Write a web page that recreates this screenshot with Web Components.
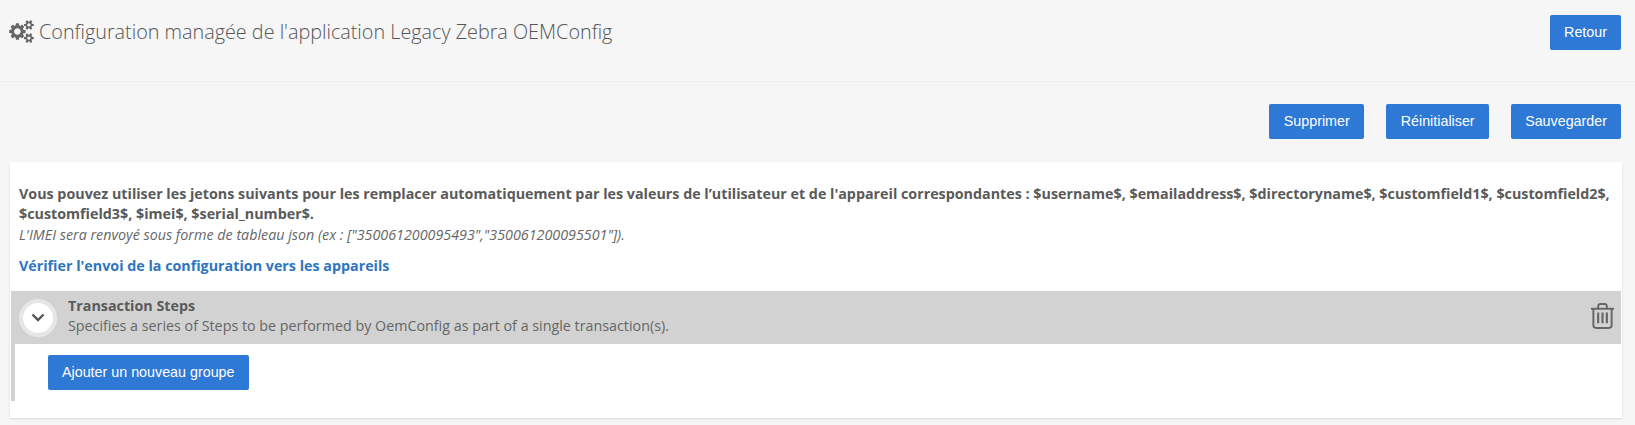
<!DOCTYPE html>
<html lang="fr"><head><meta charset="utf-8"><title>Configuration</title>
<style>
html,body{margin:0;padding:0;background:#f6f6f6;height:425px;overflow:hidden}
body{font-family:"Open Sans",sans-serif;color:#555}
</style></head><body>
<config-page></config-page>
<script>
const GEARS="M896 896q0-106-75-181t-181-75-181 75-75 181 75 181 181 75 181-75 75-181zm768 512q0-52-38-90t-90-38-90 38-38 90q0 53 37.5 90.5t90.5 37.5 90.5-37.5 37.5-90.5zm0-1024q0-52-38-90t-90-38-90 38-38 90q0 53 37.5 90.5t90.5 37.5 90.5-37.5 37.5-90.5zm-384 421v185q0 10-7 19.5t-16 10.5l-155 24q-11 35-32 76 34 48 90 115 7 11 7 20 0 12-7 19-23 30-82.5 89.5t-78.5 59.5q-11 0-21-7l-115-90q-37 19-77 31-11 108-23 155-7 24-30 24h-186q-11 0-20-7.5t-10-17.5l-23-153q-34-10-75-31l-118 89q-7 7-20 7-11 0-21-8-144-133-144-160 0-9 7-19 10-14 41-53t47-61q-23-44-35-82l-152-24q-10-1-17-9.5t-7-19.5v-185q0-10 7-19.5t16-10.5l155-24q11-35 32-76-34-48-90-115-7-11-7-20 0-12 7-20 22-30 82-89t79-59q11 0 21 7l115 90q34-18 77-32 11-108 23-154 7-24 30-24h186q11 0 20 7.5t10 17.5l23 153q34 10 75 31l118-89q8-7 20-7 11 0 21 8 144 133 144 160 0 8-7 19-12 16-42 54t-45 60q23 48 34 82l152 23q10 2 17 10.5t7 19.5zm640 533v140q0 16-149 31-12 27-30 52 51 113 51 138 0 4-4 7-122 71-124 71-8 0-46-47t-52-68q-20 2-30 2t-30-2q-14 21-52 68t-46 47q-2 0-124-71-4-3-4-7 0-25 51-138-18-25-30-52-149-15-149-31v-140q0-16 149-31 13-29 30-52-51-113-51-138 0-4 4-7 4-2 35-20t59-34 30-16q8 0 46 46.5t52 67.5q20-2 30-2t30 2q51-71 92-112l6-2q4 0 124 70 4 3 4 7 0 25-51 138 17 23 30 52 149 15 149 31zm0-1024v140q0 16-149 31-12 27-30 52 51 113 51 138 0 4-4 7-122 71-124 71-8 0-46-47t-52-68q-20 2-30 2t-30-2q-14 21-52 68t-46 47q-2 0-124-71-4-3-4-7 0-25 51-138-18-25-30-52-149-15-149-31v-140q0-16 149-31 13-29 30-52-51-113-51-138 0-4 4-7 4-2 35-20t59-34 30-16q8 0 46 46.5t52 67.5q20-2 30-2t30 2q51-71 92-112l6-2q4 0 124 70 4 3 4 7 0 25-51 138 17 23 30 52 149 15 149 31z";
function def(name,html){customElements.define(name,class extends HTMLElement{
  connectedCallback(){if(!this.shadowRoot){this.attachShadow({mode:"open"}).innerHTML=html;}}
});}
def("ui-button",`<style>
:host{display:inline-block}
button{display:block;box-sizing:border-box;height:35px;padding:0 var(--pad,14px);border:0;border-radius:2px;background:#2e78d6;color:#fff;font:14.3px/35px "Liberation Sans",Arial,sans-serif;cursor:pointer;white-space:nowrap}
</style><button><slot></slot></button>`);
def("page-header",`<style>
:host{display:flex;box-sizing:border-box;height:82px;padding:15px 14px 0 9px;justify-content:space-between;align-items:flex-start;border-bottom:1px solid #efefef}
h1{margin:0;display:flex;align-items:center;gap:5px;height:33px;font:300 19.8px/33px "Open Sans",sans-serif;color:#555}
svg{width:25px;height:23px;fill:#666;flex:none}
</style><h1><svg viewBox="0 0 1920 1792"><path fill-rule="evenodd" d="${GEARS}"/></svg><slot></slot></h1><slot name="action"></slot>`);
def("action-bar",`<style>
:host{display:flex;justify-content:flex-end;gap:22px;padding:22px 14px 23px 0}
</style><slot></slot>`);
def("ui-card",`<style>
:host{display:block;box-sizing:border-box;margin:0 13px 0 10px;height:256px;background:#fff;box-shadow:0 1px 2px rgba(0,0,0,.12);padding:22px 1px 0}
</style><slot></slot>`);
def("token-note",`<style>
:host{display:block;padding:0 8px;font:14.3px/20px "Open Sans",sans-serif;color:#5a5a5a}
b{font-weight:700}
i{display:block;margin-top:1px;font-style:italic;line-height:20px;color:#666}
a{display:block;margin-top:11px;font-weight:700;color:#2e75c0;text-decoration:none;line-height:20px}
</style><b><slot name="main"></slot></b><i><slot name="sub"></slot></i><a href="#"><slot name="link"></slot></a>`);
def("group-panel",`<style>
:host{display:block;margin-top:15px}
.bar{display:flex;align-items:center;height:53px;background:#d2d2d2;padding-right:6px}
.toggle{flex:none;box-sizing:border-box;width:38px;height:38px;margin-left:8px;border-radius:50%;background:#fff;border:4px solid #e6e6e6;display:flex;align-items:center;justify-content:center}
.text{flex:1;margin-left:11px;margin-bottom:3px;font:14.3px/20px "Open Sans",sans-serif;color:#666}
.text b{display:block;font-weight:700;color:#5a5a5a}
.trash{flex:none;width:25px;height:27px;margin-bottom:5px;color:#666}
.body{border-left:4px solid #d2d2d2;height:57px;padding:11px 0 0 33px;box-sizing:border-box}
</style><div class="bar"><span class="toggle"><svg width="14" height="9" viewBox="0 0 14 9"><path d="M1.5 1.5 7 7l5.5-5.5" fill="none" stroke="#555" stroke-width="2.4"/></svg></span>
<div class="text"><b><slot name="title"></slot></b><slot name="desc"></slot></div>
<svg class="trash" viewBox="0 0 26 28" fill="none" stroke="currentColor" stroke-width="2"><path d="M1 7h24"/><path d="M8.5 7V4.500Q8.500 2 11 2h4q2.500 0 2.500 2.500V7"/><path d="M3.500 7v17q0 3 3 3h13q3 0 3-3V7"/><path d="M8.500 11v11M13 11v11M17.500 11v11" stroke-width="2.200"/></svg>
</div><div class="body"><slot></slot></div>`);
def("config-page",`<style>
:host{display:block;width:1635px}
.wide{--pad:14.5px}
</style>
<page-header>Configuration managée de l'application Legacy Zebra OEMConfig<ui-button slot="action">Retour</ui-button></page-header>
<action-bar><ui-button class="wide">Supprimer</ui-button><ui-button class="wide">Réinitialiser</ui-button><ui-button>Sauvegarder</ui-button></action-bar>
<ui-card>
<token-note>
<span slot="main">Vous pouvez utiliser les jetons suivants pour les remplacer automatiquement par les valeurs de l’utilisateur et de l'appareil correspondantes : $username$, $emailaddress$, $directoryname$, $customfield1$, $customfield2$, $customfield3$, $imei$, $serial_number$.</span>
<span slot="sub">L'IMEI sera renvoyé sous forme de tableau json (ex : ["350061200095493","350061200095501"]).</span>
<span slot="link">Vérifier l'envoi de la configuration vers les appareils</span>
</token-note>
<group-panel><span slot="title">Transaction Steps</span><span slot="desc">Specifies a series of Steps to be performed by OemConfig as part of a single transaction(s).</span><ui-button>Ajouter un nouveau groupe</ui-button></group-panel>
</ui-card>`);
</script></body></html>
